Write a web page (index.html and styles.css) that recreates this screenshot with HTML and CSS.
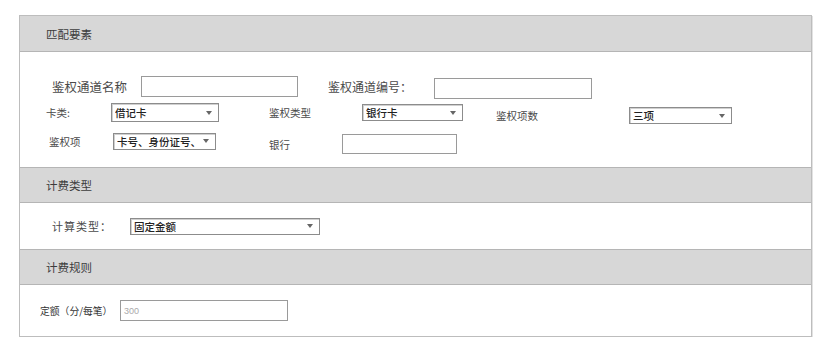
FILE: index.html
```html
<!DOCTYPE html>
<html lang="zh">
<head>
<meta charset="utf-8">
<link rel="stylesheet" href="styles.css">
</head>
<body>
<div class="panel">
  <div class="head first">匹配要素</div>
  <div class="body body-match">
    <div class="row row1">
      <span class="lbl big w-name">鉴权通道名称</span>
      <span class="input w157"></span>
      <span class="lbl mid w-code">鉴权通道编号：</span>
      <span class="input w158 down2"></span>
    </div>
    <div class="row row2">
      <span class="lbl w65">卡类:</span>
      <span class="select w108 h19"><span class="val">借记卡</span><span class="arrow"></span></span>
      <span class="lbl ml50 w93">鉴权类型</span>
      <span class="select w101"><span class="val">银行卡</span><span class="arrow"></span></span>
      <span class="lbl ml33 w133 down3">鉴权项数</span>
      <span class="select w103 down3"><span class="val">三项</span><span class="arrow"></span></span>
    </div>
    <div class="row row3">
      <span class="lbl w64">鉴权项</span>
      <span class="select w103"><span class="val">卡号、身份证号、</span><span class="arrow"></span></span>
      <span class="lbl ml53 w73 down3">银行</span>
      <span class="input w115 h20 down3"></span>
    </div>
  </div>
  <div class="head">计费类型</div>
  <div class="body body-type">
    <div class="row">
      <span class="lbl wide w78">计算类型：</span>
      <span class="select w190"><span class="val">固定金额</span><span class="arrow"></span></span>
    </div>
  </div>
  <div class="head">计费规则</div>
  <div class="body body-rule">
    <div class="row">
      <span class="lbl small w80">定额（分/每笔）</span>
      <span class="input w168"><span class="ph">300</span></span>
    </div>
  </div>
</div>
</body>
</html>
```

FILE: styles.css
```css
* { box-sizing: border-box; }
html, body { margin: 0; padding: 0; background: #fff; }
body {
  font-family: "Noto Sans CJK SC", "Noto Sans", sans-serif;
  color: #444;
}
.panel {
  margin: 15px 0 0 19px;
  width: 793px;
  border: 1px solid #bdbdbd;
  box-shadow: 1px 1px 0 #e2e2e2;
}
.head {
  height: 36px;
  background: #d7d7d7;
  border-top: 1px solid #b5b5b5;
  border-bottom: 1px solid #b5b5b5;
  padding-left: 26px;
  display: flex;
  align-items: center;
  font-size: 11.5px;
  color: #3c3c3c;
}
.head.first { border-top: none; height: 36px; }
.body { background: #fff; }
.body-match { height: 115px; padding-top: 23px; }
.body-type { height: 46px; display: flex; align-items: center; padding-left: 32px; }
.body-rule { height: 51px; display: flex; align-items: center; padding-left: 20px; }

.row { display: flex; align-items: center; }
.row1 { padding-left: 32px; height: 22px; }
.row2 { padding-left: 26px; height: 19px; margin-top: 6px; }
.row3 { padding-left: 29px; height: 18px; margin-top: 10px; }

.lbl { font-size: 10.5px; color: #4a4a4a; white-space: nowrap; flex: none; }
.lbl.big { font-size: 12.5px; }
.lbl.mid { font-size: 12px; }
.lbl.wide { font-size: 11px; letter-spacing: 1px; }
.lbl.small { font-size: 9.8px; color: #333; }

.w-name { width: 89px; }
.w-code { width: 106px; margin-left: 30px; }
.w64 { width: 64px; }
.w65 { width: 65px; }
.w73 { width: 73px; }
.w78 { width: 78px; }
.w80 { width: 80px; }
.w93 { width: 93px; }
.w133 { width: 133px; }
.ml33 { margin-left: 33px; }
.ml50 { margin-left: 50px; }
.ml53 { margin-left: 53px; }
.down2 { position: relative; top: 2px; }
.down3 { position: relative; top: 3px; }

.input {
  flex: none;
  height: 21px;
  border: 1px solid #9a9a9a;
  background: #fff;
  display: flex;
  align-items: center;
  padding-left: 3px;
}
.h20 { height: 20px; }
.w157 { width: 157px; }
.w158 { width: 158px; }
.w115 { width: 115px; }
.w168 { width: 168px; }
.ph { font-size: 9px; color: #aaa; font-family: "Liberation Sans", Arial, sans-serif; }

.select {
  flex: none;
  position: relative;
  height: 17px;
  border: 1px solid #8c8c8c;
  box-shadow: inset 1px 1px 0 #d0d0d0;
  background: #fff;
  display: flex;
  align-items: center;
  padding-left: 3px;
}
.select.h19 { height: 19px; }
.select .val { font-size: 10.5px; color: #222; font-weight: 500; white-space: nowrap; overflow: hidden; }
.select .arrow {
  position: absolute;
  right: 6px;
  top: calc(50% - 2px);
  width: 0; height: 0;
  border-left: 3px solid transparent;
  border-right: 3px solid transparent;
  border-top: 4px solid #666;
}
.w101 { width: 101px; }
.w103 { width: 103px; }
.w108 { width: 108px; }
.w190 { width: 190px; }
```
